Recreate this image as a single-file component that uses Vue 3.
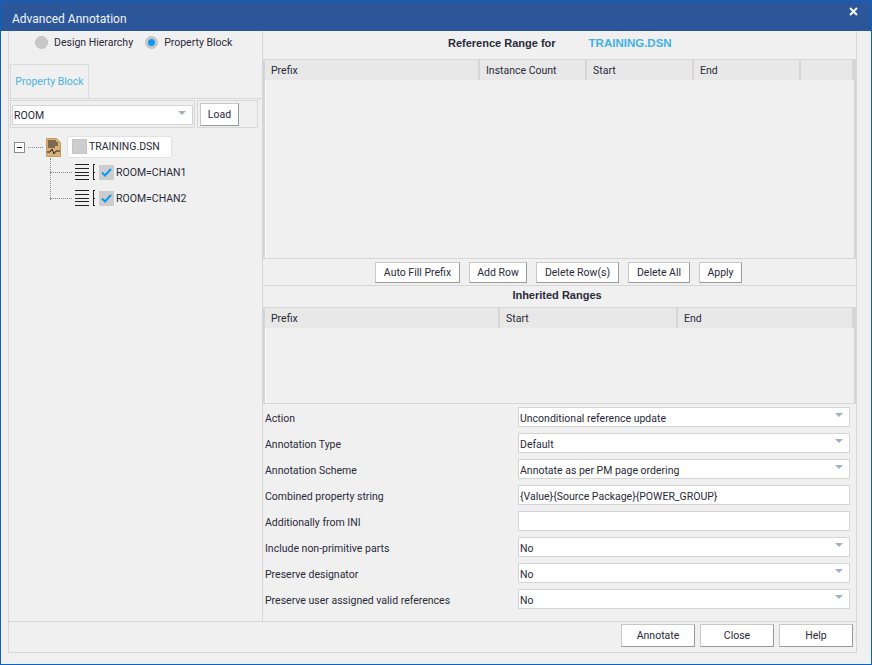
<template>
  <div class="window">
    <div class="titlebar">
      <span>Advanced Annotation</span>
      <svg class="close-x" width="9" height="9" viewBox="0 0 9 9"><path d="M1 1l7 7M8 1l-7 7" stroke="#fff" stroke-width="2" /></svg>
    </div>
    <div class="body">
      <div class="panel">
        <div class="main">
          <div class="left">
            <div class="radios">
              <label class="radio"><i class="dot"></i>Design Hierarchy</label>
              <label class="radio"><i class="dot on"></i>Property Block</label>
            </div>
            <div class="tabstrip"><div class="tab">Property Block</div></div>
            <div class="loadrow">
              <div class="cell combo-cell">
                <div class="select small">ROOM<i class="arrow"></i></div>
              </div>
              <div class="cell load-cell"><button class="btn load">Load</button></div>
            </div>
            <div class="tree">
              <div class="root-node">
                <span class="minus"></span>
                <span class="h-dots root-dots"></span>
                <svg class="doc" width="15" height="19" viewBox="0 0 15 19">
                  <path d="M0.5 0.5h10l4 4v14h-14z" fill="#d8b078" stroke="#c09a62" />
                  <path d="M2 3h8M2 5h10M2 7h10M2 9h7" stroke="#222" fill="none" />
                  <path d="M1 14h3l2-3 2 5 2-3h4" stroke="#222" fill="none" />
                </svg>
                <div class="root-label"><i class="gray-box"></i>TRAINING.DSN</div>
              </div>
              <div class="children">
                <span class="v-dots"></span>
                <div class="child" v-for="c in channels" :key="c">
                  <span class="h-dots child-dots"></span>
                  <svg class="lines" width="20" height="16" viewBox="0 0 20 16">
                    <path d="M0 0.5h14M0 4.5h14M0 8.5h14M0 11.5h14M0 15.5h14M18.5 0v16" stroke="#222" fill="none" />
                    <path d="M19 0.5h1M19 8.5h1M19 15.5h1" stroke="#222" fill="none" />
                  </svg>
                  <span class="check">
                    <svg width="11" height="9" viewBox="0 0 11 9"><path d="M1 4.5l3 3 6-6.5" stroke="#0a9af0" stroke-width="2" fill="none" /></svg>
                  </span>
                  <span class="child-text">{{ c }}</span>
                </div>
              </div>
            </div>
          </div>
          <div class="right">
            <div class="range-title">
              <b>Reference Range for</b><b class="dsn">TRAINING.DSN</b>
            </div>
            <div class="grid-box top-grid">
              <div class="grid-head">
                <div v-for="h in refCols" :key="h.name" class="col" :style="{ width: h.w + 'px' }">{{ h.name }}</div>
              </div>
            </div>
            <div class="toolbar">
              <button v-for="b in toolButtons" :key="b.t" class="btn tool" :style="{ width: b.w + 'px' }">{{ b.t }}</button>
            </div>
            <div class="inherit-title">Inherited Ranges</div>
            <div class="grid-box low-grid">
              <div class="grid-head">
                <div v-for="h in inhCols" :key="h.name" class="col" :style="{ width: h.w + 'px' }">{{ h.name }}</div>
              </div>
            </div>
            <div class="form">
              <div class="form-row" v-for="r in formRows" :key="r.label">
                <span class="form-label">{{ r.label }}</span>
                <div class="select">{{ r.value }}<i v-if="r.combo" class="arrow"></i></div>
              </div>
            </div>
          </div>
        </div>
        <div class="footer">
          <button class="btn foot">Annotate</button>
          <button class="btn foot">Close</button>
          <button class="btn foot">Help</button>
        </div>
      </div>
    </div>
  </div>
</template>

<script setup>
const channels = ['ROOM=CHAN1', 'ROOM=CHAN2']

const refCols = [
  { name: 'Prefix', w: 215 },
  { name: 'Instance Count', w: 107 },
  { name: 'Start', w: 107 },
  { name: 'End', w: 107 },
  { name: '', w: 53 }
]
const inhCols = [
  { name: 'Prefix', w: 235 },
  { name: 'Start', w: 178 },
  { name: 'End', w: 176 }
]
const toolButtons = [
  { t: 'Auto Fill Prefix', w: 85 },
  { t: 'Add Row', w: 58 },
  { t: 'Delete Row(s)', w: 83 },
  { t: 'Delete All', w: 62 },
  { t: 'Apply', w: 43 }
]
const formRows = [
  { label: 'Action', value: 'Unconditional reference update', combo: true },
  { label: 'Annotation Type', value: 'Default', combo: true },
  { label: 'Annotation Scheme', value: 'Annotate as per PM page ordering', combo: true },
  { label: 'Combined property string', value: '{Value}{Source Package}{POWER_GROUP}', combo: false },
  { label: 'Additionally from INI', value: '', combo: false },
  { label: 'Include non-primitive parts', value: 'No', combo: true },
  { label: 'Preserve designator', value: 'No', combo: true },
  { label: 'Preserve user assigned valid references', value: 'No', combo: true }
]
</script>

<style>
html, body { margin: 0; padding: 0; }
</style>

<style scoped>
.window {
  width: 872px;
  height: 665px;
  box-sizing: border-box;
  display: flex;
  flex-direction: column;
  background: #f0f0f0;
  border: 1px solid #0b62c4;
  font-family: Roboto, "Liberation Sans", sans-serif;
  font-size: 10.5px;
  color: #2a2a3a;
  overflow: hidden;
}
.titlebar {
  height: 30px;
  flex: none;
  background: #2b579a;
  color: #f2f4f8;
  font-size: 12px;
  position: relative;
  padding: 11px 0 0 11px;
  box-sizing: border-box;
}
.close-x {
  position: absolute;
  right: 13px;
  top: 6px;
}
.body {
  flex: 1;
  padding: 0 14px 11px 7px;
  display: flex;
  min-height: 0;
}
.panel {
  flex: 1;
  border: 1px solid #d6d6d6;
  border-top: none;
  display: flex;
  flex-direction: column;
}
.main {
  height: 590px;
  display: flex;
  border-bottom: 1px solid #d6d6d6;
}
.left {
  width: 253px;
  flex: none;
  border-right: 1px solid #d6d6d6;
}
.radios {
  height: 33px;
  padding: 0 0 10px 26px;
  display: flex;
  align-items: center;
  gap: 12px;
  box-sizing: border-box;
}
.radio {
  display: flex;
  align-items: center;
  gap: 6px;
}
.dot {
  width: 13px;
  height: 13px;
  border-radius: 50%;
  background: #c8c8c8;
  border: 1px solid #c0c0c0;
  box-sizing: border-box;
  display: inline-flex;
  align-items: center;
  justify-content: center;
}
.dot.on::after {
  content: "";
  width: 7px;
  height: 7px;
  border-radius: 50%;
  background: #0a9af5;
}
.tabstrip {
  height: 34px;
  padding-left: 1px;
  border-bottom: 1px solid #d6d6d6;
  display: flex;
}
.tab {
  width: 79px;
  box-sizing: border-box;
  border: 1px solid #dcdcdc;
  border-bottom: none;
  color: #4ab4e8;
  display: flex;
  align-items: center;
  justify-content: center;
}
.loadrow {
  display: flex;
  gap: 2px;
  padding: 1px 0 0 1px;
}
.cell {
  height: 28px;
  box-sizing: border-box;
  border: 1px solid #d8d8d8;
  display: flex;
  align-items: center;
}
.combo-cell { width: 185px; padding-left: 1px; }
.load-cell { width: 61px; padding-left: 2px; }
.select {
  position: relative;
  flex: 1;
  height: 20px;
  margin-top: -2px;
  box-sizing: border-box;
  background: #fff;
  border: 1px solid #d4d4d4;
  padding-left: 1px;
  line-height: 22px;
  white-space: nowrap;
}
.select.small { flex: none; width: 181px; margin-top: 2px; line-height: 20px; }
.arrow {
  position: absolute;
  right: 6px;
  top: 5px;
  width: 0;
  height: 0;
  border-left: 4px solid transparent;
  border-right: 4px solid transparent;
  border-top: 4px solid #a3aec8;
}
.btn {
  font: inherit;
  color: inherit;
  padding: 0;
  background: #fff;
  border: 1px solid #c8c8c8;
  border-right-color: #9a9a9a;
  border-bottom-color: #9a9a9a;
  border-radius: 0;
  box-sizing: border-box;
}
.load { width: 39px; height: 23px; }
.tree { padding: 8px 0 0 5px; }
.root-node {
  display: flex;
  align-items: center;
  height: 22px;
}
.minus {
  width: 11px;
  height: 11px;
  box-sizing: border-box;
  border: 1px solid #8a8a8a;
  background: #fff;
  position: relative;
}
.minus::after {
  content: "";
  position: absolute;
  left: 2px;
  right: 2px;
  top: 4px;
  height: 1px;
  background: #111;
}
.h-dots { border-top: 1px dotted #8a8a8a; height: 0; }
.root-dots { width: 15px; margin: 0 3px 0 3px; }
.doc { flex: none; margin-right: 6px; }
.root-label {
  height: 22px;
  width: 105px;
  box-sizing: border-box;
  background: #fff;
  border: 1px solid #e2e2e2;
  border-radius: 2px;
  display: flex;
  align-items: center;
  gap: 2px;
  padding: 0 0 1px 4px;
}
.gray-box {
  width: 15px;
  height: 15px;
  background: #cdcdcd;
  border: 1px solid #c4c4c4;
  box-sizing: border-box;
}
.children {
  position: relative;
  padding: 1px 0 0 36px;
}
.v-dots {
  position: absolute;
  left: 36px;
  top: 0;
  height: 42px;
  border-left: 1px dotted #8a8a8a;
}
.child {
  display: flex;
  align-items: center;
  height: 26px;
}
.child-dots { width: 22px; margin-right: 3px; }
.lines { flex: none; margin-right: 4px; }
.check {
  width: 15px;
  height: 15px;
  box-sizing: border-box;
  background: #cdcdcd;
  display: flex;
  align-items: center;
  justify-content: center;
  margin-right: 2px;
}
.right {
  flex: 1;
  min-width: 0;
  display: flex;
  flex-direction: column;
}
.range-title {
  height: 28px;
  flex: none;
  display: flex;
  align-items: center;
  padding: 0 0 4px 185px;
  gap: 33px;
  box-sizing: border-box;
  font-family: "Liberation Sans", Arial, sans-serif;
  font-size: 11px;
}
.dsn { color: #3fb0ea; font-size: 11.5px; }
.grid-box {
  border: 1px solid #d6d6d6;
  border-left-width: 2px;
  border-right-width: 2px;
  border-bottom: none;
  flex: none;
  box-shadow: inset 1px 0 0 #fbfbfb;
}
.top-grid { height: 198px; }
.low-grid { height: 95px; border-bottom: 1px solid #d6d6d6; }
.grid-head {
  height: 20px;
  display: flex;
  background: #e8e8e8;
}
.col {
  box-sizing: border-box;
  border-right: 2px solid #d6d6d6;
  padding-left: 6px;
  line-height: 22px;
  flex: none;
}
.toolbar {
  height: 28px;
  flex: none;
  box-sizing: border-box;
  border-top: 1px solid #d6d6d6;
  border-bottom: 1px solid #d6d6d6;
  display: flex;
  align-items: center;
  padding-left: 112px;
  gap: 9px;
}
.tool { height: 21px; }
.inherit-title {
  height: 21px;
  flex: none;
  font-family: "Liberation Sans", Arial, sans-serif;
  font-size: 11px;
  font-weight: 700;
  text-align: center;
  line-height: 19px;
  padding-right: 5px;
}
.form {
  flex: 1;
  padding-top: 1px;
  display: flex;
  flex-direction: column;
}
.form-row {
  height: 26px;
  display: flex;
  align-items: center;
  padding: 0 6px 0 2px;
  flex: none;
}
.form-label { width: 253px; flex: none; white-space: nowrap; }
.footer {
  flex: 1;
  display: flex;
  justify-content: flex-end;
  align-items: flex-start;
  padding: 2px 3px 0 0;
  gap: 5px;
}
.foot { width: 74px; height: 23px; }
</style>
